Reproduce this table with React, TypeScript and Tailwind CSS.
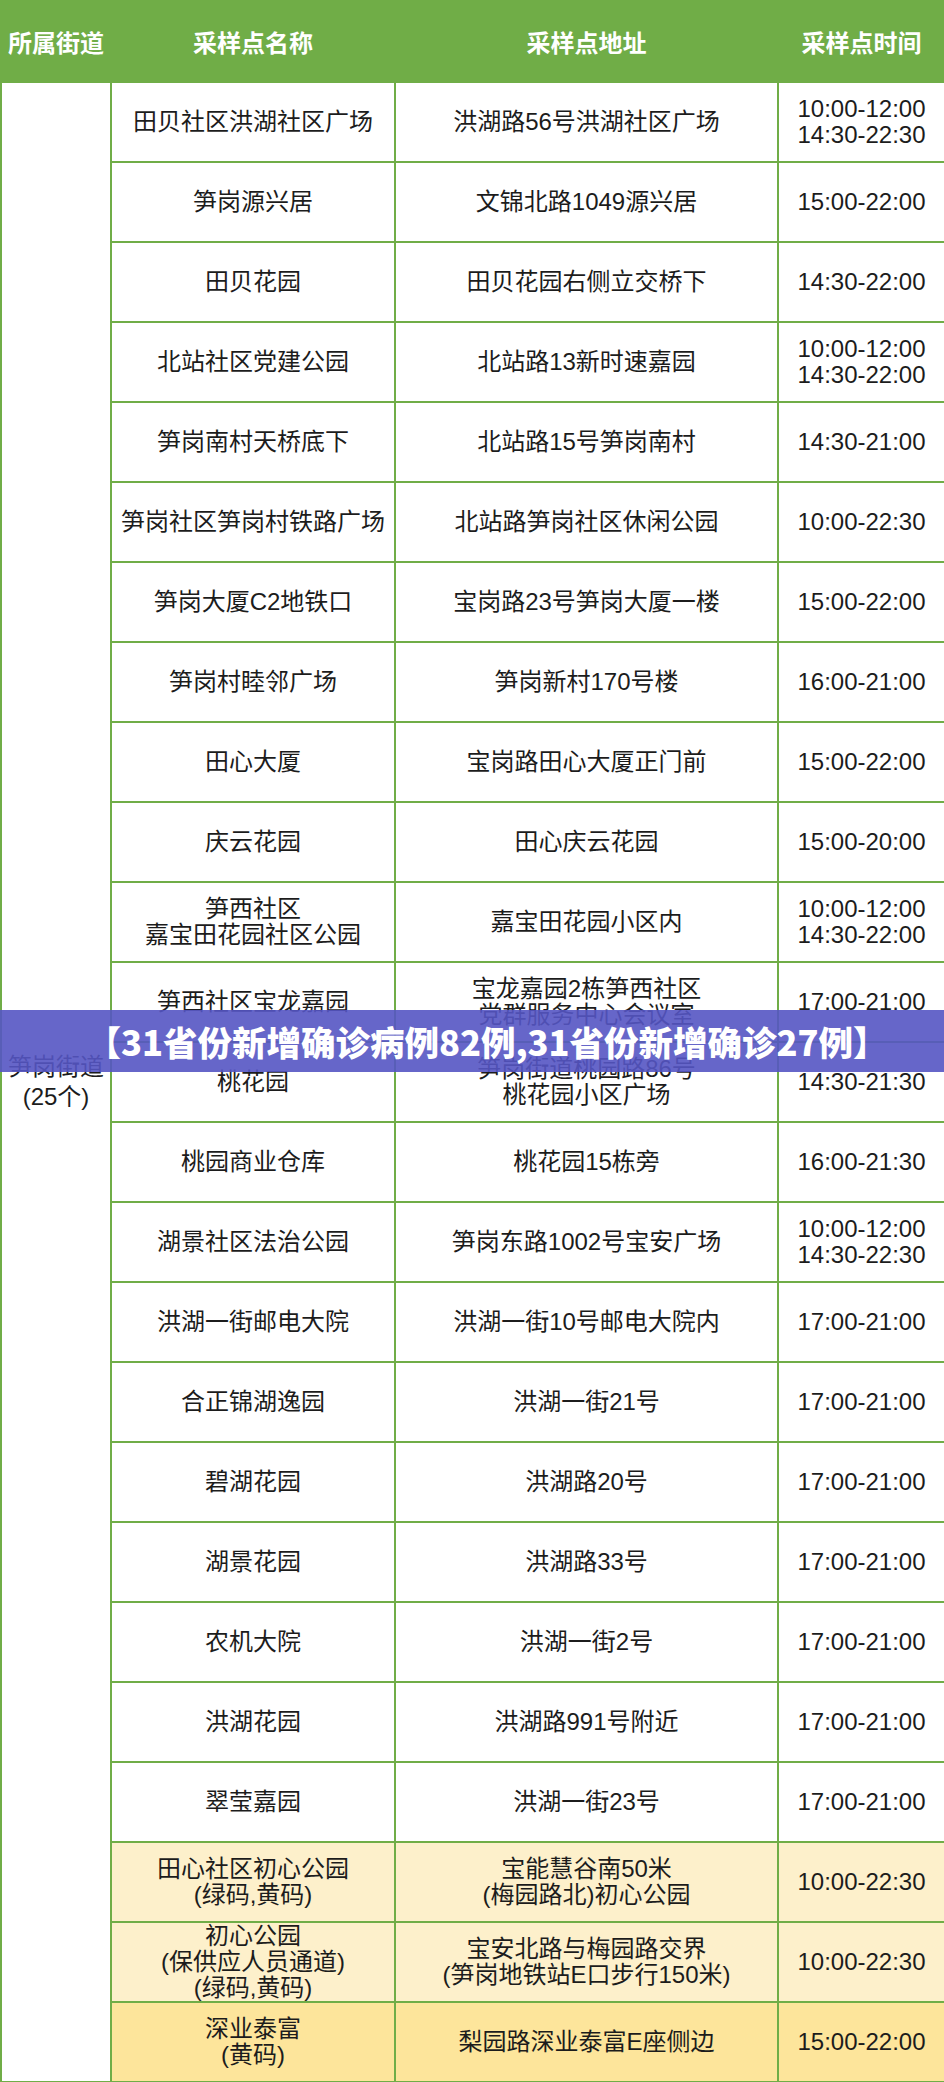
type Row = {
  name: string[]
  addr: string[]
  time: string[]
  bg?: string
}

const rows: Row[] = [
  { name: ['田贝社区洪湖社区广场'], addr: ['洪湖路56号洪湖社区广场'], time: ['10:00-12:00', '14:30-22:30'] },
  { name: ['笋岗源兴居'], addr: ['文锦北路1049源兴居'], time: ['15:00-22:00'] },
  { name: ['田贝花园'], addr: ['田贝花园右侧立交桥下'], time: ['14:30-22:00'] },
  { name: ['北站社区党建公园'], addr: ['北站路13新时速嘉园'], time: ['10:00-12:00', '14:30-22:00'] },
  { name: ['笋岗南村天桥底下'], addr: ['北站路15号笋岗南村'], time: ['14:30-21:00'] },
  { name: ['笋岗社区笋岗村铁路广场'], addr: ['北站路笋岗社区休闲公园'], time: ['10:00-22:30'] },
  { name: ['笋岗大厦C2地铁口'], addr: ['宝岗路23号笋岗大厦一楼'], time: ['15:00-22:00'] },
  { name: ['笋岗村睦邻广场'], addr: ['笋岗新村170号楼'], time: ['16:00-21:00'] },
  { name: ['田心大厦'], addr: ['宝岗路田心大厦正门前'], time: ['15:00-22:00'] },
  { name: ['庆云花园'], addr: ['田心庆云花园'], time: ['15:00-20:00'] },
  { name: ['笋西社区', '嘉宝田花园社区公园'], addr: ['嘉宝田花园小区内'], time: ['10:00-12:00', '14:30-22:00'] },
  { name: ['笋西社区宝龙嘉园'], addr: ['宝龙嘉园2栋笋西社区', '党群服务中心会议室'], time: ['17:00-21:00'] },
  { name: ['桃花园'], addr: ['笋岗街道桃园路86号', '桃花园小区广场'], time: ['14:30-21:30'] },
  { name: ['桃园商业仓库'], addr: ['桃花园15栋旁'], time: ['16:00-21:30'] },
  { name: ['湖景社区法治公园'], addr: ['笋岗东路1002号宝安广场'], time: ['10:00-12:00', '14:30-22:30'] },
  { name: ['洪湖一街邮电大院'], addr: ['洪湖一街10号邮电大院内'], time: ['17:00-21:00'] },
  { name: ['合正锦湖逸园'], addr: ['洪湖一街21号'], time: ['17:00-21:00'] },
  { name: ['碧湖花园'], addr: ['洪湖路20号'], time: ['17:00-21:00'] },
  { name: ['湖景花园'], addr: ['洪湖路33号'], time: ['17:00-21:00'] },
  { name: ['农机大院'], addr: ['洪湖一街2号'], time: ['17:00-21:00'] },
  { name: ['洪湖花园'], addr: ['洪湖路991号附近'], time: ['17:00-21:00'] },
  { name: ['翠莹嘉园'], addr: ['洪湖一街23号'], time: ['17:00-21:00'] },
  {
    name: ['田心社区初心公园', '(绿码,黄码)'],
    addr: ['宝能慧谷南50米', '(梅园路北)初心公园'],
    time: ['10:00-22:30'],
    bg: 'bg-[#fdf0cb]',
  },
  {
    name: ['初心公园', '(保供应人员通道)', '(绿码,黄码)'],
    addr: ['宝安北路与梅园路交界', '(笋岗地铁站E口步行150米)'],
    time: ['10:00-22:30'],
    bg: 'bg-[#fdf0cb]',
  },
  { name: ['深业泰富', '(黄码)'], addr: ['梨园路深业泰富E座侧边'], time: ['15:00-22:00'], bg: 'bg-[#fde59b]' },
]

function Lines({ items }: { items: string[] }) {
  return (
    <>
      {items.map((t) => (
        <div key={t}>{t}</div>
      ))}
    </>
  )
}

const cell = 'border-2 border-[#70ad47] px-1 text-center align-middle whitespace-nowrap'

export default function App() {
  return (
    <div className="relative w-[944px] bg-white font-['Liberation_Sans','Noto_Sans_CJK_SC',sans-serif] text-[24px] leading-[26px] text-[#1c1c1c]">
      <table className="w-[944px] table-fixed border-collapse">
        <colgroup>
          <col className="w-[110px]" />
          <col className="w-[284px]" />
          <col className="w-[383px]" />
          <col className="w-[167px]" />
        </colgroup>
        <thead>
          <tr className="h-[81px] bg-[#70ad47] text-white">
            <th className={`${cell} pt-1 font-bold`}>所属街道</th>
            <th className={`${cell} pt-1 font-bold`}>采样点名称</th>
            <th className={`${cell} pt-1 font-bold`}>采样点地址</th>
            <th className={`${cell} pt-1 font-bold`}>采样点时间</th>
          </tr>
        </thead>
        <tbody>
          {rows.map((r, i) => (
            <tr key={i} className={`h-[80px] ${r.bg ?? 'bg-white'}`}>
              {i === 0 && (
                <td rowSpan={rows.length} className={`${cell} bg-white leading-[30px]`}>
                  <div>笋岗街道</div>
                  <div>(25个)</div>
                </td>
              )}
              <td className={cell}>
                <Lines items={r.name} />
              </td>
              <td className={cell}>
                <Lines items={r.addr} />
              </td>
              <td className={cell}>
                <Lines items={r.time} />
              </td>
            </tr>
          ))}
        </tbody>
      </table>

      {/* title banner over the table */}
      <div className="absolute top-[1010px] left-0 flex h-[62px] w-[944px] items-center justify-center bg-[rgba(85,85,195,0.9)] pl-[30px]">
        <span className="font-['Noto_Sans_CJK_SC',sans-serif] text-[34.5px] font-black leading-none text-white">
          【31省份新增确诊病例82例,31省份新增确诊27例】
        </span>
      </div>
    </div>
  )
}
